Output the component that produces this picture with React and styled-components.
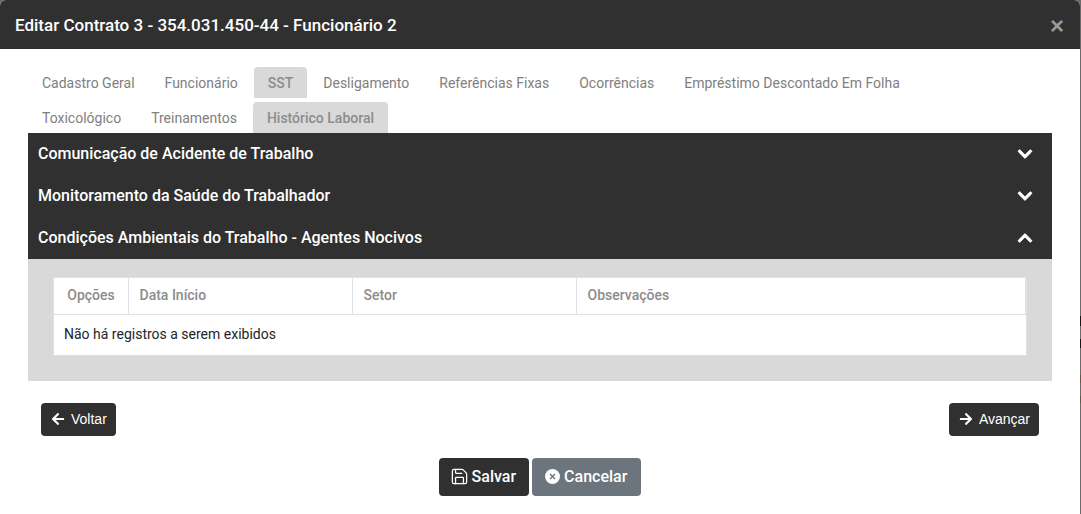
import React from "react";
import styled, { createGlobalStyle } from "styled-components";
import { FaArrowLeft, FaArrowRight, FaChevronDown, FaChevronUp } from "react-icons/fa";
import { Save } from "lucide-react";

const Global = createGlobalStyle`
  html, body {
    margin: 0;
    padding: 0;
    height: 100%;
    overflow: hidden;
    background: linear-gradient(
      to bottom,
      #6b6b6b 316px,
      #161616 316px 326px,
      #6b6b6b 326px 339px,
      #161616 339px 348px,
      #6b6b6b 348px 375px,
      #5f5a48 375px 383px,
      #6b6b6b 383px 396px,
      #5f5a48 396px 403px,
      #6b6b6b 403px
    );
  }
  * {
    box-sizing: border-box;
  }
`;

const Modal = styled.div`
  width: 1080px;
  height: 514px;
  background: #fff;
  border-radius: 6px 6px 0 0;
  overflow: hidden;
  font-family: Roboto, sans-serif;
  font-size: 14px;
`;
const Header = styled.div`
  height: 49px;
  background: #303030;
  display: flex;
  align-items: center;
  justify-content: space-between;
  padding: 0 16px 0 15px;
`;
const Title = styled.div`
  color: #fff;
  font-size: 17px;
  font-weight: 500;
`;
const Close = styled.span`
  color: #999;
  font-size: 24px;
  font-weight: 700;
  line-height: 1;
  padding-top: 3px;
  font-family: "Liberation Sans", sans-serif;
`;
const Body = styled.div`
  padding: 18px 28px 0;
`;
const Tabs = styled.div`
  display: flex;
  flex-wrap: wrap;
`;
const TabRow = styled.div`
  display: flex;
  width: 100%;
  height: ${(p) => p.$h};
`;
const Tab = styled.div`
  height: 31px;
  margin-right: ${(p) => (p.$last ? "0" : "2px")};
  padding: 0 14px;
  line-height: 32px;
  color: ${(p) => (p.$active ? "#8c8c8c" : "#808080")};
  font-weight: ${(p) => (p.$active ? 500 : 400)};
  background: ${(p) => (p.$active ? "#d9d9d9" : "transparent")};
  border-radius: 4px 4px 0 0;
  white-space: nowrap;
`;
const Section = styled.div`
  height: 42px;
  background: #303030;
  color: #fff;
  font-size: 16px;
  font-weight: 500;
  display: flex;
  align-items: center;
  justify-content: space-between;
  padding: 0 20px 2px 10px;
  svg {
    stroke: currentColor;
    stroke-width: 30px;
    margin: 2px -1px 0 0;
  }
`;
const Panel = styled.div`
  background: #d9d9d9;
  padding: 18px 25px 25px 25px;
`;
const Table = styled.div`
  background: #fff;
  border: 1px solid #dee2e6;
`;
const HeadRow = styled.div`
  display: grid;
  grid-template-columns: 75px 224px 224px 1fr;
  height: 37px;
  border-bottom: 1px solid #dee2e6;
`;
const HeadCell = styled.div`
  display: flex;
  align-items: center;
  padding: 0 10.5px 2px;
  font-weight: 500;
  color: #8c8c8c;
  border-right: 1px solid #dee2e6;
  justify-content: ${(p) => (p.$center ? "center" : "flex-start")};
`;
const EmptyRow = styled.div`
  height: 40px;
  display: flex;
  align-items: center;
  padding: 0 10px 2px;
  color: #212529;
`;
const Nav = styled.div`
  display: flex;
  justify-content: space-between;
  padding: 22px 13px 0;
`;
const NavButton = styled.div`
  height: 33px;
  background: #303030;
  color: #fff;
  border-radius: 4px;
  display: flex;
  align-items: center;
  gap: 6px;
  padding: 0 9px 1px 10px;
  font-family: "Liberation Sans", sans-serif;
  font-size: 14px;
`;
const Actions = styled.div`
  display: flex;
  justify-content: center;
  gap: 3px;
  padding-top: 22px;
`;
const ActionButton = styled.div`
  height: 38px;
  background: ${(p) => (p.$gray ? "#6c757d" : "#303030")};
  color: #fff;
  border-radius: 4px;
  display: flex;
  align-items: center;
  gap: 4px;
  padding: 0 ${(p) => (p.$gray ? "14px" : "13px")} 2px 13px;
  font-size: 16px;
  font-weight: 500;
`;
const SaveIcon = styled(Save)`
  margin: 0 -1px 0 -2px;
`;

function CancelIcon() {
  return (
    <svg width="15" height="15" viewBox="0 0 15 15">
      <circle cx="7.5" cy="7.5" r="7.5" fill="#fff" />
      <path d="M5 5l5 5M10 5l-5 5" stroke="#6c757d" strokeWidth="1.4" fill="none" />
    </svg>
  );
}

const sections = [
  ["Comunicação de Acidente de Trabalho", false],
  ["Monitoramento da Saúde do Trabalhador", false],
  ["Condições Ambientais do Trabalho - Agentes Nocivos", true],
];

export default function App() {
  return (
    <>
      <Global />
      <Modal>
        <Header>
          <Title>Editar Contrato 3 - 354.031.450-44 - Funcionário 2</Title>
          <Close>×</Close>
        </Header>
        <Body>
          <Tabs>
            <TabRow $h="35px">
              <Tab>Cadastro Geral</Tab>
              <Tab>Funcionário</Tab>
              <Tab $active>SST</Tab>
              <Tab>Desligamento</Tab>
              <Tab>Referências Fixas</Tab>
              <Tab>Ocorrências</Tab>
              <Tab $last>Empréstimo Descontado Em Folha</Tab>
            </TabRow>
            <TabRow $h="31px">
              <Tab>Toxicológico</Tab>
              <Tab>Treinamentos</Tab>
              <Tab $active>Histórico Laboral</Tab>
            </TabRow>
          </Tabs>
          {sections.map(([name, open]) => (
            <Section key={name}>
              {name}
              {open ? <FaChevronUp size={16} /> : <FaChevronDown size={16} />}
            </Section>
          ))}
          <Panel>
            <Table>
              <HeadRow>
                <HeadCell $center>Opções</HeadCell>
                <HeadCell>Data Início</HeadCell>
                <HeadCell>Setor</HeadCell>
                <HeadCell>Observações</HeadCell>
              </HeadRow>
              <EmptyRow>Não há registros a serem exibidos</EmptyRow>
            </Table>
          </Panel>
          <Nav>
            <NavButton><FaArrowLeft size={14} />Voltar</NavButton>
            <NavButton><FaArrowRight size={14} />Avançar</NavButton>
          </Nav>
        </Body>
        <Actions>
          <ActionButton><SaveIcon size={19} strokeWidth={1.6} />Salvar</ActionButton>
          <ActionButton $gray><CancelIcon />Cancelar</ActionButton>
        </Actions>
      </Modal>
    </>
  );
}
